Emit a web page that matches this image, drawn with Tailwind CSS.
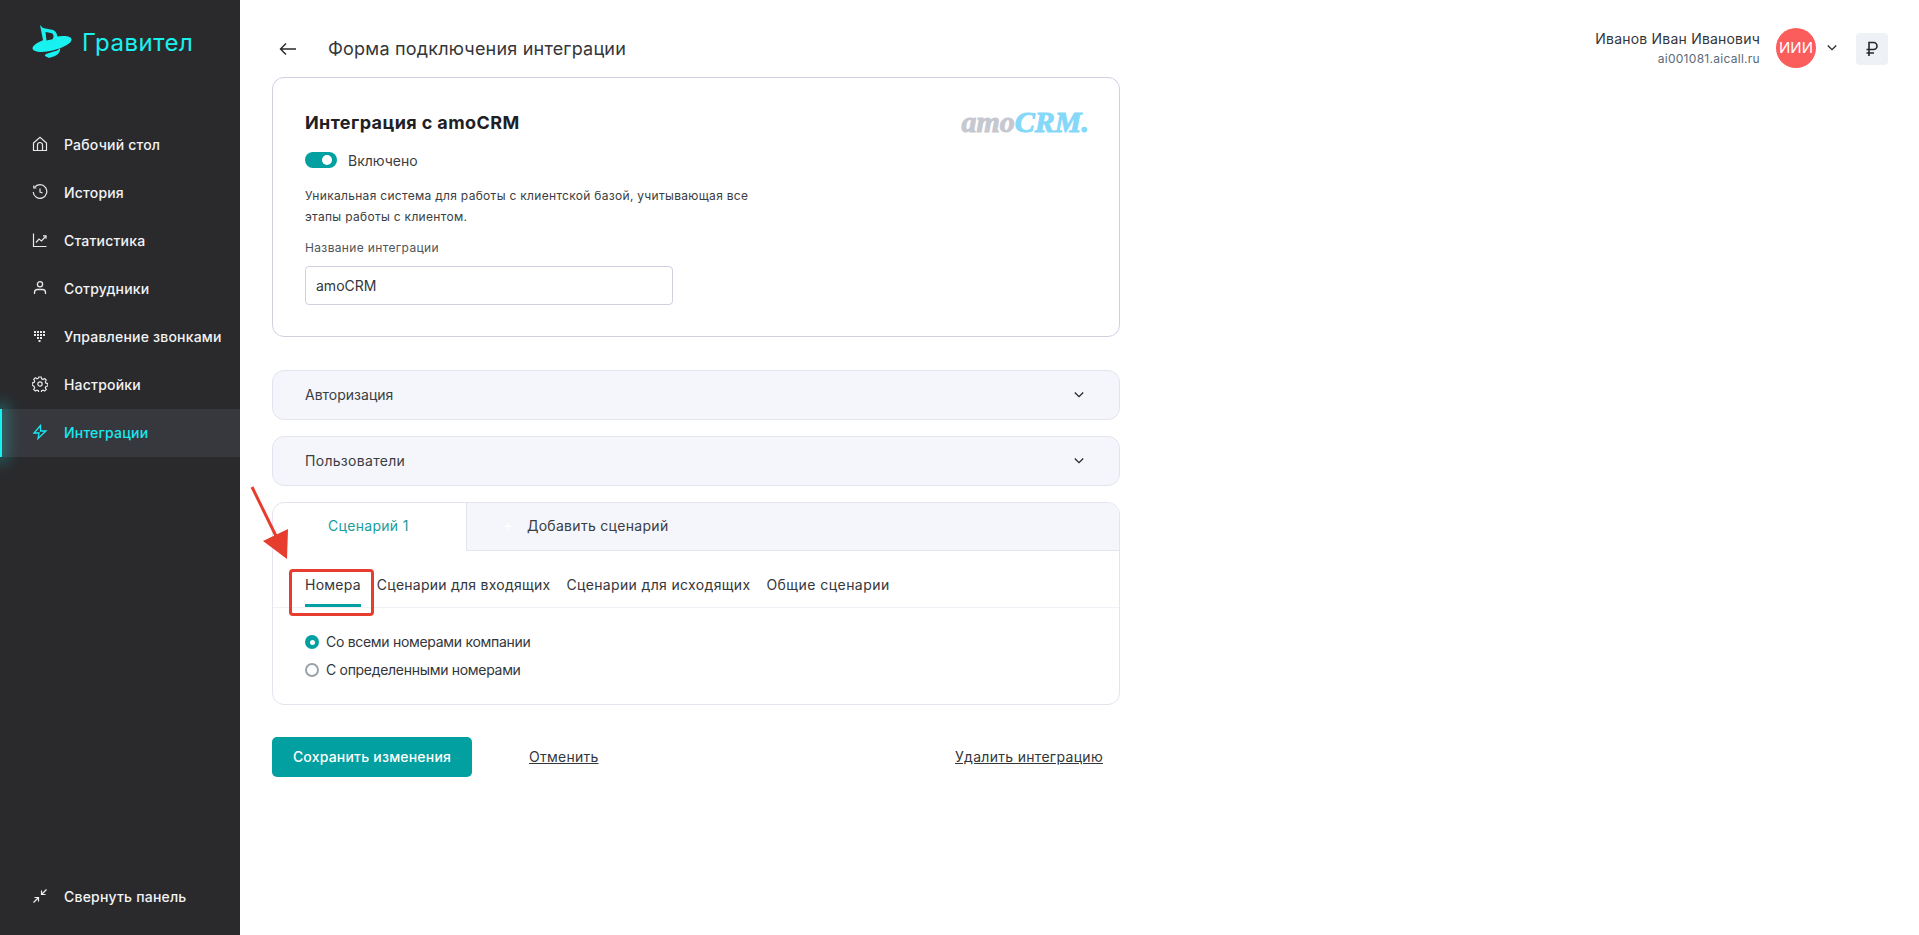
<!DOCTYPE html>
<html lang="ru">
<head>
<meta charset="utf-8">
<title>Форма подключения интеграции</title>
<script src="https://cdn.jsdelivr.net/npm/@tailwindcss/browser@4"></script>
</head>
<body class="bg-white font-['Inter','Noto_Sans',sans-serif] text-[#26282c]">
<div class="relative flex h-[935px] w-[1919px] overflow-hidden">
  <aside class="flex h-full w-[240px] shrink-0 flex-col bg-[#2a2a2d] text-white">
    <div class="flex h-[121px] items-start pl-[32px] pt-[24px]">
      <svg class="h-[34px] w-[40px]" viewBox="0 0 40 34" fill="#19f0f0"><ellipse cx="20" cy="20" rx="20" ry="6.5" transform="rotate(-14 20 20)"/><path d="M8 1l3 3 10 2c4 2 5 6 4 10l-13 5z"/><path d="M13 32c-1-2 4-3 7-4 4-1 7-2 8-4 1 4-3 8-8 9l-3 1z"/><path fill="#2a2a2d" d="M13.5 8l6.5 1.2c2 1.5 2 4 .5 6l-6 1.3z"/></svg>
      <span class="ml-[10px] mt-[3px] text-[24px] font-normal leading-[32px] tracking-[0.5px] text-[#19f0f0]">Гравител</span>
    </div>
    <nav class="flex flex-col text-[14px] font-medium tracking-[0.2px]">
      <a class="flex h-[48px] items-center pb-[2px] pl-[32px] text-[#f2f3f5]"><svg class="mr-[16px] h-[16px] w-[16px]" viewBox="0 0 16 16" fill="none" stroke="#e8e8ea" stroke-width="1.2"><path d="M1.5 7L8 1.2 14.5 7v7.5h-13z"/><path d="M5.5 14.5V9a2.5 2.5 0 015 0v5.5"/></svg>Рабочий стол</a>
      <a class="flex h-[48px] items-center pb-[2px] pl-[32px] text-[#f2f3f5]"><svg class="mr-[16px] h-[16px] w-[16px]" viewBox="0 0 16 16" fill="none" stroke="#e8e8ea" stroke-width="1.2"><path d="M2.5 3.5A6.8 6.8 0 111.2 8"/><path d="M1.8 1.5v2.5h2.5"/><path d="M8 4.5V8l2.5 1"/></svg>История</a>
      <a class="flex h-[48px] items-center pb-[2px] pl-[32px] text-[#f2f3f5]"><svg class="mr-[16px] h-[16px] w-[16px]" viewBox="0 0 16 16" fill="none" stroke="#e8e8ea" stroke-width="1.2"><path d="M1.5 1.5v13h13"/><path d="M4 10.5l3-3.5 2.5 2L14 4"/><path d="M11 3.8h3v3"/></svg>Статистика</a>
      <a class="flex h-[48px] items-center pb-[2px] pl-[32px] text-[#f2f3f5]"><svg class="mr-[16px] h-[16px] w-[16px]" viewBox="0 0 16 16" fill="none" stroke="#e8e8ea" stroke-width="1.3"><circle cx="8" cy="4.2" r="2.6"/><path d="M2.5 14v-1.5A3 3 0 015.5 9.5h5a3 3 0 013 3V14"/></svg>Сотрудники</a>
      <a class="flex h-[48px] items-center pb-[2px] pl-[32px] text-[#f2f3f5]"><svg class="mr-[16px] h-[16px] w-[16px]" viewBox="0 0 16 16" fill="#e8e8ea"><rect x="2" y="3" width="2" height="2"/><rect x="5" y="3" width="2" height="2"/><rect x="8" y="3" width="2" height="2"/><rect x="11" y="3" width="2" height="2"/><rect x="2" y="6" width="2" height="2"/><rect x="5" y="6" width="2" height="2"/><rect x="8" y="6" width="2" height="2"/><rect x="11" y="6" width="2" height="2"/><rect x="5" y="9" width="2" height="2"/><rect x="8" y="9" width="2" height="2"/><rect x="6.5" y="12" width="2" height="2"/></svg>Управление звонками</a>
      <a class="flex h-[48px] items-center pb-[2px] pl-[32px] text-[#f2f3f5]"><svg class="mr-[16px] h-[16px] w-[16px]" viewBox="0 0 16 16" fill="none" stroke="#e8e8ea" stroke-width="1.2"><circle cx="8" cy="8" r="2.2"/><path d="M6.8 1h2.4l.4 1.9 1.4.6 1.6-1 1.7 1.7-1 1.6.6 1.4 1.9.4v2.4l-1.9.4-.6 1.4 1 1.6-1.7 1.7-1.6-1-1.4.6-.4 1.9H6.8l-.4-1.9-1.4-.6-1.6 1-1.7-1.7 1-1.6-.6-1.4L.2 9.2V6.8l1.9-.4.6-1.4-1-1.6 1.7-1.7 1.6 1 1.4-.6z"/></svg>Настройки</a>
      <a class="relative flex h-[48px] items-center bg-[#37383e] pb-[2px] pl-[32px] text-[#19e8f0]"><span class="absolute left-0 top-0 h-full w-[2px] bg-[#19f0f0] shadow-[0_0_14px_6px_rgba(25,240,240,0.28)]"></span><svg class="mr-[16px] h-[16px] w-[16px]" viewBox="0 0 16 16" fill="none" stroke="#19e8f0" stroke-width="1.3"><path d="M8.5 1.5L2 9h5l-1 5.5L14 7H8.5z"/></svg>Интеграции</a>
    </nav>
    <a class="mt-auto mb-[15px] flex h-[48px] items-center pl-[32px] text-[14px] font-medium tracking-[0.2px] text-[#f2f3f5]"><svg class="mr-[16px] h-[16px] w-[16px]" viewBox="0 0 16 16" fill="none" stroke="#f0f0f2" stroke-width="1.2"><path d="M14.5 1.5L9.5 6.5M9.5 2.5v4h4"/><path d="M1.5 14.5l5-5M2.5 9.5h4v4"/></svg>Свернуть панель</a>
  </aside>

  <main class="flex min-w-0 flex-1 flex-col pl-[32px] pr-[31px]">
    <header class="flex h-[77px] shrink-0 justify-between">
      <div class="flex h-full items-center pt-[20px]">
        <svg class="ml-[7px] h-[14px] w-[17px]" viewBox="0 0 17 14" fill="none" stroke="#26282c" stroke-width="1.4"><path d="M17 7H1.5M7 1.5L1.5 7 7 12.5"/></svg>
        <h1 class="ml-[32px] text-[18px] font-normal tracking-[0.2px] text-[#33363b]">Форма подключения интеграции</h1>
      </div>
      <div class="flex items-start pt-[28px]">
        <div class="mr-[16px] pt-[1px] text-right">
          <div class="text-[14px] leading-[20px] tracking-[0.2px] text-[#33363b]">Иванов Иван Иванович</div>
          <div class="text-[12px] leading-[20px] tracking-[0.28px] text-[#5a6b78]">ai001081.aicall.ru</div>
        </div>
        <div class="flex h-[40px] w-[40px] items-center justify-center rounded-full bg-[#fb5c5c] text-[15px] text-white">ИИИ</div>
        <svg class="ml-[11px] mt-[16px] h-[8px] w-[10px]" viewBox="0 0 10 8" fill="none" stroke="#26282c" stroke-width="1.3"><path d="M.8 1.5L5 5.7 9.2 1.5"/></svg>
        <div class="ml-[19px] mt-[5px] flex h-[32px] w-[32px] items-center justify-center rounded-[4px] bg-[#eef1f6]"><svg class="h-[16px] w-[14px]" viewBox="0 0 14 16" fill="none" stroke="#26282c" stroke-width="1.6"><path d="M4 15V1.5h4.5a3.5 3.5 0 010 7H1.5M1.5 12H9"/></svg></div>
      </div>
    </header>

    <div class="flex w-[848px] flex-col">
      <section class="relative h-[260px] rounded-[12px] border border-[#cfd0e0] pl-[32px] pt-[32px]">
        <h2 class="text-[18px] font-bold leading-[26px] tracking-[0.4px] text-[#1e2024]">Интеграция с amoCRM</h2>
        <div class="mt-[16px] flex h-[16px] items-center">
          <span class="flex h-[16px] w-[32px] items-center justify-end rounded-full bg-[#02a0a0] pr-[5px]"><span class="h-[10px] w-[10px] rounded-full bg-white"></span></span>
          <span class="ml-[11px] text-[14px] text-[#3a3d42]">Включено</span>
        </div>
        <p class="mt-[17px] w-[480px] text-[12px] leading-[21px] tracking-[0.3px] text-[#3a3d42]">Уникальная система для работы с клиентской базой, учитывающая все этапы работы с клиентом.</p>
        <label class="mt-[11px] block text-[12px] leading-[20px] tracking-[0.35px] text-[#50545a]">Название интеграции</label>
        <div class="mt-[8px] flex h-[39px] w-[368px] items-center rounded-[4px] border border-[#cfd0e0] pl-[10px] text-[14px] text-[#33363b]">amoCRM</div>
        <div class="absolute right-[30px] top-[26px] font-['Liberation_Serif',serif] text-[30px] font-bold italic leading-[36px] text-[#c6c8cf] [-webkit-text-stroke:1px_currentColor]">amo<span class="text-[#84d8f8]">CRM.</span></div>
      </section>

      <div class="mt-[33px] flex h-[50px] items-center justify-between rounded-[12px] border border-[#e3e4f0] bg-[#f5f6fb] pb-[1px] pl-[32px] pr-[35px] text-[14px] text-[#3a3d42]">Авторизация<svg class="h-[8px] w-[10px]" viewBox="0 0 10 8" fill="none" stroke="#26282c" stroke-width="1.3"><path d="M.8 1.5L5 5.7 9.2 1.5"/></svg></div>
      <div class="mt-[16px] flex h-[50px] items-center justify-between rounded-[12px] border border-[#e3e4f0] bg-[#f5f6fb] pb-[1px] pl-[32px] pr-[35px] text-[14px] tracking-[0.3px] text-[#3a3d42]">Пользователи<svg class="h-[8px] w-[10px]" viewBox="0 0 10 8" fill="none" stroke="#26282c" stroke-width="1.3"><path d="M.8 1.5L5 5.7 9.2 1.5"/></svg></div>

      <section class="mt-[16px] h-[203px] overflow-hidden rounded-[12px] border border-[#e3e4f0]">
        <div class="flex h-[48px] text-[14px] tracking-[0.3px]">
          <div class="flex w-[193px] items-center pb-[3px] pl-[55px] text-[#1a9c9c]">Сценарий 1</div>
          <div class="flex flex-1 items-center border-b border-l border-[#e3e4f0] bg-[#f5f6fb] pb-[3px] pl-[36px] text-[#3a3d42]"><span class="mr-[13px] text-[16px] leading-none text-white">+</span>Добавить сценарий</div>
        </div>
        <div class="flex h-[57px] items-stretch gap-[16px] border-b border-[#f0f1f6] pl-[32px] text-[14px] tracking-[0.25px] text-[#33363b]">
          <div class="flex items-center border-b-[3px] border-[#02a0a0] pt-[14px]">Номера</div>
          <div class="flex items-center border-b-[3px] border-transparent pt-[14px]">Сценарии для входящих</div>
          <div class="flex items-center border-b-[3px] border-transparent pt-[14px] tracking-[0.35px]">Сценарии для исходящих</div>
          <div class="flex items-center border-b-[3px] border-transparent pt-[14px] tracking-[0.45px]">Общие сценарии</div>
        </div>
        <div class="flex flex-col gap-[8px] pl-[32px] pt-[24px] text-[14px] leading-[20px] tracking-[-0.3px] text-[#33363b]">
          <div class="flex items-center"><span class="mr-[7px] flex h-[14px] w-[14px] items-center justify-center rounded-full bg-[#02a0a0]"><span class="h-[5px] w-[5px] rounded-full bg-white"></span></span>Со всеми номерами компании</div>
          <div class="flex items-center"><span class="mr-[7px] h-[14px] w-[14px] rounded-full border-2 border-[#9aa2aa]"></span>С определенными номерами</div>
        </div>
      </section>

      <div class="mt-[32px] flex items-center">
        <button class="h-[40px] w-[200px] rounded-[5px] bg-[#02a0a0] pb-[2px] text-[14px] font-medium tracking-[0.2px] text-white">Сохранить изменения</button>
        <a class="ml-[57px] pb-[2px] text-[14px] tracking-[0.25px] text-[#33363b] underline">Отменить</a>
        <a class="ml-auto mr-[17px] pb-[2px] text-[14px] tracking-[0.3px] text-[#33363b] underline">Удалить интеграцию</a>
      </div>
    </div>
  </main>

  <div class="absolute left-[289px] top-[569px] h-[47px] w-[85px] rounded-[4px] border-[3px] border-[#e63d2f]"></div>
  <svg class="absolute left-[246px] top-[482px] h-[90px] w-[50px]" viewBox="0 0 50 90" fill="none"><path d="M6 5L30 54" stroke="#e63d2f" stroke-width="3"/><path d="M42 47L41 77 17 59z" fill="#e63d2f"/></svg>
</div>
</body>
</html>
